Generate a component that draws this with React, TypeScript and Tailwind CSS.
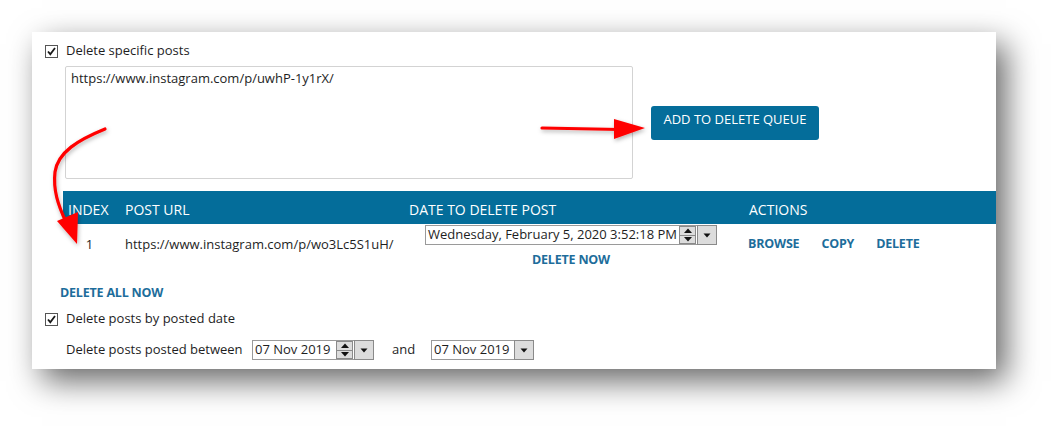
import React from "react";

const font = { fontFamily: '"Open Sans", "Noto Sans", sans-serif' };

function Check() {
  return (
    <div className="w-[13px] h-[13px] border border-[#555] bg-white flex items-center justify-center shrink-0">
      <svg width="11" height="11" viewBox="0 0 11 11">
        <path d="M2 5.5 L4.3 8.2 L9 2" fill="none" stroke="#1a1a1a" strokeWidth="1.8" />
      </svg>
    </div>
  );
}

function Tri({ up }: { up?: boolean }) {
  return (
    <svg width="8" height="5" viewBox="0 0 8 5">
      {up ? <path d="M0 5 L4 0.5 L8 5 Z" fill="#111" /> : <path d="M0 0 L8 0 L4 4.5 Z" fill="#111" />}
    </svg>
  );
}

function Spinner() {
  return (
    <div className="flex flex-col w-[17px] h-[18px] border border-[#8a8a8a] shrink-0">
      <div className="flex-1 bg-[#dcdcdc] border-b border-[#8a8a8a] flex items-center justify-center">
        <Tri up />
      </div>
      <div className="flex-1 bg-[#dcdcdc] flex items-center justify-center">
        <Tri />
      </div>
    </div>
  );
}

function Drop() {
  return (
    <div className="w-[20px] h-[20px] border border-[#8a8a8a] bg-[#dcdcdc] flex items-center justify-center shrink-0">
      <svg width="8" height="5" viewBox="0 0 8 5">
        <path d="M0.5 0.5 L7.5 0.5 L4 4.5 Z" fill="#111" />
      </svg>
    </div>
  );
}

function DatePicker({ text, width, spin }: { text: string; width: number; spin?: boolean }) {
  return (
    <div className="flex items-center h-[20px]" style={{ width }}>
      <div className="flex-1 h-[20px] border border-[#9a9a9a] border-r-0 bg-white flex items-center pl-[2px] pr-[1px] text-[13px] text-[#1e1e1e] whitespace-nowrap overflow-hidden">
        <span className="flex-1">{text}</span>
        {spin && <Spinner />}
      </div>
      <Drop />
    </div>
  );
}

function Link({ children }: { children: React.ReactNode }) {
  return <span className="text-[12.5px] font-bold text-[#1d6d9b] tracking-[-0.2px]">{children}</span>;
}

export default function App() {
  return (
    <div className="relative w-[1061px] h-[434px] bg-white overflow-hidden" style={font}>
      <div className="absolute left-[32px] top-[32px] w-[964px] h-[337px] bg-white shadow-[10px_12px_30px_rgba(0,0,0,0.6)]" />
      <div className="relative ml-[32px] mt-[32px] w-[964px] h-[337px] pt-[11px] pl-[13px] text-[#1e1e1e]">
        <div className="flex items-center gap-[8px] h-[13px] mt-[2px]">
          <Check />
          <span className="text-[13px] leading-none -mt-[2px]">Delete specific posts</span>
        </div>
        <div className="flex items-center mt-[8px] ml-[20px]">
          <div className="w-[568px] h-[113px] border border-[#d3d3d3] rounded-[2px] px-[5px] pt-[2px] text-[13px] text-[#1e1e1e]">
            https://www.instagram.com/p/uwhP-1y1rX/
          </div>
          <div className="ml-[18px] w-[168px] h-[34px] rounded-[3px] bg-[#046d9a] text-white text-[13px] flex items-start justify-center pt-[4px]">
            ADD TO DELETE QUEUE
          </div>
        </div>
        <div className="ml-[18px] mt-[12px] h-[33px] bg-[#046d9a] text-white text-[14px] grid grid-cols-[57px_284px_340px_1fr] items-center pt-[4px]">
          <div className="pl-[5px]">INDEX</div>
          <div className="pl-[5px]">POST URL</div>
          <div className="pl-[5px]">DATE TO DELETE POST</div>
          <div className="pl-[5px]">ACTIONS</div>
        </div>
        <div className="ml-[18px] grid grid-cols-[57px_284px_340px_1fr] items-start">
          <div className="text-center text-[13px] pt-[11px] pr-[4px]">1</div>
          <div className="pl-[5px] text-[13px] pt-[11px]">https://www.instagram.com/p/wo3Lc5S1uH/</div>
          <div className="flex flex-col items-center pt-[1px] pr-[6px]">
            <DatePicker text="Wednesday, February 5, 2020 3:52:18 PM" width={292} spin />
            <div className="mt-[1px]">
              <Link>DELETE NOW</Link>
            </div>
          </div>
          <div className="flex gap-[22px] pl-[4px] pt-[11px]">
            <Link>BROWSE</Link>
            <Link>COPY</Link>
            <Link>DELETE</Link>
          </div>
        </div>
        <div className="ml-[15px] mt-[9px]">
          <Link>DELETE ALL NOW</Link>
        </div>
        <div className="flex items-center gap-[8px] mt-[10px]">
          <Check />
          <span className="text-[13px] leading-none -mt-[2px]">Delete posts by posted date</span>
        </div>
        <div className="flex items-center ml-[21px] mt-[14px] text-[13px]">
          <span className="w-[186px]">Delete posts posted between</span>
          <DatePicker text="07 Nov 2019" width={122} spin />
          <span className="ml-[18px] w-[39px]">and</span>
          <DatePicker text="07 Nov 2019" width={103} />
        </div>
      </div>
      <svg className="absolute left-0 top-0 pointer-events-none" width="1061" height="434" viewBox="0 0 1061 434">
        <defs>
          <filter id="ds" x="-20%" y="-20%" width="140%" height="140%">
            <feDropShadow dx="1" dy="2" stdDeviation="2" floodColor="#000" floodOpacity="0.3" />
          </filter>
        </defs>
        <g filter="url(#ds)" fill="#f00" stroke="#f00">
          <path d="M542 128 L620 129.5" strokeWidth="3.2" fill="none" strokeLinecap="round" />
          <path d="M614 119 L645 128 L614 139 Z" stroke="none" />
          <path d="M105 129 C78 140 58 152 55 172 C53 190 58 205 66 222" strokeWidth="3.2" fill="none" strokeLinecap="round" />
          <path d="M57 221 L78 212 L77 244 Z" stroke="none" />
        </g>
      </svg>
    </div>
  );
}
